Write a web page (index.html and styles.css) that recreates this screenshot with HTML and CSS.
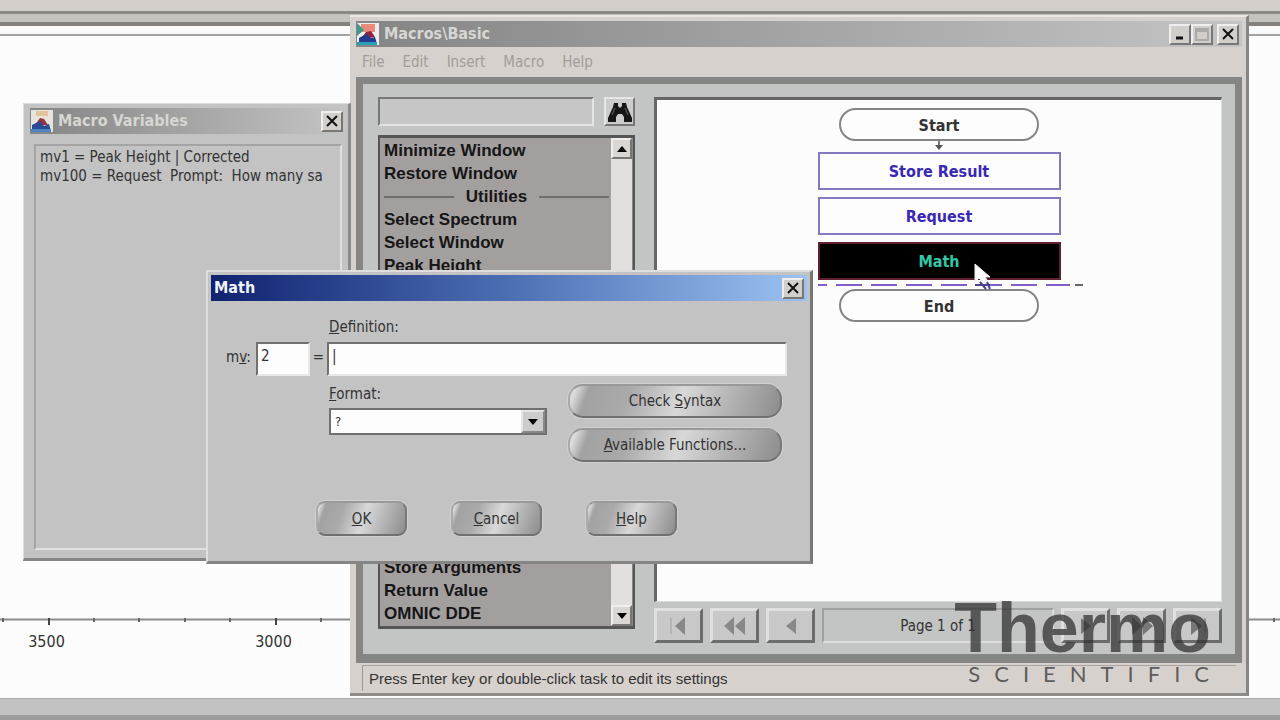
FILE: index.html
```html
<!DOCTYPE html>
<html lang="en">
<head>
<meta charset="utf-8">
<title>Macros\Basic</title>
<link rel="stylesheet" href="styles.css">
</head>
<body>
<div class="desktop">
  <div class="toolbar-edge"></div>
  <div class="toolbar-gap"></div>
  <main class="plot">
    <div class="axis">
      <svg class="axis-ticks" width="100%" height="8" aria-hidden="true">
        <defs><pattern id="ticks" x="48" width="227" height="8" patternUnits="userSpaceOnUse">
          <path d="M0 1.500H227" stroke="#8c8c8c" stroke-width="2"/>
          <path d="M1 0V7" stroke="#444" stroke-width="2"/>
          <path d="M46 0V4M91 0V4M137 0V4M182 0V4" stroke="#666" stroke-width="2"/>
        </pattern></defs>
        <rect width="100%" height="8" fill="url(#ticks)"/>
      </svg>
      <div class="axis-labels"><span>3500</span><span>3000</span></div>
    </div>
  </main>
  <div class="desktop-foot"></div>

  <section class="window macros">
    <header class="titlebar">
      <svg class="app-icon" viewBox="0 0 22 22" aria-hidden="true"><path fill="#eee" d="M0 0h22v22H0z"/><path fill="#e98a7c" d="M4 1h14v8H4z"/><path fill="#3b9a8c" d="M0 0l7 7-7 6z"/><path fill="#8c2440" d="M4 16l5-7 5-1 4 6z"/><path fill="#243a8c" d="M2 21v-6l7-4 5 4 4-1 2 7z"/><path fill="#2aa0b4" d="M0 19h20v3H0z"/></svg>
      <h1 class="title">Macros\Basic</h1>
      <div class="window-buttons">
        <button class="win-btn" aria-label="Minimize"><svg width="12" height="12" viewBox="0 0 12 12"><path d="M2 10h7" stroke="#111" stroke-width="3"/></svg></button>
        <button class="win-btn" aria-label="Maximize"><svg width="14" height="14" viewBox="0 0 14 14"><path d="M1 2h12v11H1z M1 4h12" fill="none" stroke="#aaa" stroke-width="2"/></svg></button>
        <button class="win-btn last" aria-label="Close"><svg width="12" height="12" viewBox="0 0 12 12"><path d="M1 1l10 10M11 1L1 11" stroke="#111" stroke-width="2"/></svg></button>
      </div>
    </header>
    <nav class="menubar">
      <button>File</button><button>Edit</button><button>Insert</button><button>Macro</button><button>Help</button>
    </nav>
    <div class="workspace">
      <div class="tasks">
        <div class="search">
          <input class="search-box" aria-label="Find task">
          <button class="find" aria-label="Find"><svg width="26" height="24" viewBox="0 0 26 24"><path fill="#161616" d="M7 3h4v3l2 2 2-2V3h4l1 4 5 11v4h-8v-5l-2-3h-4l-2 3v5H1v-4L6 7z"/><path d="M8 8L5 15M18 8l3 7" stroke="#666" stroke-width="1"/></svg></button>
        </div>
        <div class="task-list">
          <div class="task-items">
            <ul>
              <li>Minimize Window</li>
              <li>Restore Window</li>
              <li class="group">Utilities</li>
              <li>Select Spectrum</li>
              <li>Select Window</li>
              <li>Peak Height</li>
            </ul>
            <ul>
              <li>Store Arguments</li>
              <li>Return Value</li>
              <li>OMNIC DDE</li>
            </ul>
          </div>
          <div class="scrollbar">
            <button aria-label="Scroll up"><svg width="10" height="6" viewBox="0 0 10 6"><path d="M5 0l5 6H0z"/></svg></button>
            <span class="thumb"></span>
            <button aria-label="Scroll down"><svg width="10" height="6" viewBox="0 0 10 6"><path d="M0 0h10L5 6z"/></svg></button>
          </div>
        </div>
      </div>
      <div class="flow">
        <div class="canvas">
          <div class="chart">
            <div class="node terminal">Start</div>
            <svg class="arrow" width="10" height="11" viewBox="0 0 10 11"><path d="M5 0v5" stroke="#777" stroke-width="2"/><path d="M1 4h8L5 9z" fill="#555"/></svg>
            <div class="node task">Store Result</div>
            <div class="node task">Request</div>
            <div class="node task selected">Math</div>
            <svg class="insert-line" width="270" height="6" viewBox="0 0 270 6"><path d="M0 3h252" stroke="#8060c8" stroke-width="2" stroke-dasharray="26 9" stroke-dashoffset="17"/><path d="M257 3h8" stroke="#666" stroke-width="2"/></svg>
            <div class="node terminal">End</div>
            <svg class="cursor" width="26" height="32" viewBox="0 0 26 32"><path d="M3 23h15M8 20l6 7M15 20l3 7" stroke="#47428a" stroke-width="2"/><path d="M3 2v18l4-4 4 4 4-2-2-3h5z" fill="#fff" stroke="#eee" stroke-width="1"/></svg>
          </div>
        </div>
        <div class="pager">
          <button aria-label="First page"><svg width="22" height="18" viewBox="0 0 22 18"><path d="M3 1v16" stroke="#b4b4b4" stroke-width="2"/><path d="M17 0v18L7 9z" fill="#888"/></svg></button>
          <button aria-label="Fast back"><svg width="22" height="18" viewBox="0 0 22 18"><path d="M10 0v18L0 9zM21 0v18L11 9z" fill="#888"/></svg></button>
          <button aria-label="Previous page"><svg width="22" height="18" viewBox="0 0 22 18"><path d="M16 1v16L6 9z" fill="#888"/></svg></button>
          <output class="page-number">Page 1 of 1</output>
          <button aria-label="Next page"><svg width="22" height="18" viewBox="0 0 22 18"><path d="M6 1v16l10-8z" fill="#777"/></svg></button>
          <button aria-label="Fast forward"><svg width="22" height="18" viewBox="0 0 22 18"><path d="M1 0v18l10-9zM12 0v18l10-9z" fill="#777"/></svg></button>
          <button aria-label="Last page"><svg width="22" height="18" viewBox="0 0 22 18"><path d="M4 0v18l11-9z" fill="#777"/><path d="M18 1v16" stroke="#999" stroke-width="2"/></svg></button>
        </div>
      </div>
    </div>
    <footer class="status">Press Enter key or double-click task to edit its settings</footer>
  </section>

  <section class="window variables">
    <header class="titlebar">
      <svg class="app-icon" viewBox="0 0 22 22" aria-hidden="true"><path fill="#e6e4dc" d="M0 0h22v22H0z"/><path fill="#e2c3a0" d="M5 1h12v5H5z"/><path fill="#98303e" d="M4 15l5-7 4 1 4 6z"/><path fill="#2b4a94" d="M1 21v-6l8-4 4 5 5-2 2 7z"/><path fill="#4c84c4" d="M0 19h20v3H0z"/></svg>
      <h2 class="title">Macro Variables</h2>
      <button class="win-btn" aria-label="Close"><svg width="12" height="12" viewBox="0 0 12 12"><path d="M1 1l10 10M11 1L1 11" stroke="#111" stroke-width="2"/></svg></button>
    </header>
    <div class="variable-list">
      <div>mv1 = Peak Height | Corrected</div>
      <div>mv100 = Request&nbsp; Prompt:&nbsp; How many sa</div>
    </div>
  </section>

  <form class="window dialog">
    <header class="titlebar active">
      <h2 class="title">Math</h2>
      <button type="button" class="win-btn" aria-label="Close"><svg width="12" height="12" viewBox="0 0 12 12"><path d="M1 1l10 10M11 1L1 11" stroke="#111" stroke-width="2"/></svg></button>
    </header>
    <div class="fields">
      <label class="def-label" for="definition"><u>D</u>efinition:</label>
      <label class="mv-label" for="mv">m<u>v</u>:</label>
      <input class="field" id="mv" value="2">
      <span class="equals">=</span>
      <input class="field definition" id="definition" value="|">
      <div class="format">
        <label for="format"><u>F</u>ormat:</label>
        <div class="combo">
          <select id="format"><option>?</option></select>
          <span class="combo-arrow"><svg width="10" height="6" viewBox="0 0 10 6"><path d="M0 0h10L5 6z"/></svg></span>
        </div>
      </div>
      <div class="helpers">
        <button type="button" class="metal wide"><span>Check <u>S</u>yntax</span></button>
        <button type="button" class="metal wide"><span><u>A</u>vailable Functions...</span></button>
      </div>
    </div>
    <div class="actions">
      <button type="button" class="metal"><span><u>O</u>K</span></button>
      <button type="button" class="metal"><span><u>C</u>ancel</span></button>
      <button type="button" class="metal"><span><u>H</u>elp</span></button>
    </div>
  </form>

  <div class="brand">
    <div class="brand-name">Thermo</div>
    <div class="brand-sub">SCIENTIFIC</div>
  </div>
</div>
</body>
</html>
```
FILE: styles.css
```css
* { box-sizing: border-box; }
body { margin: 0; font-family: "DejaVu Sans Condensed", "DejaVu Sans", sans-serif; font-size: 15px; color: #333; }
h1, h2, ul { margin: 0; padding: 0; }
button, input, select { font: inherit; color: inherit; margin: 0; padding: 0; border-radius: 0; outline: none; }
svg { display: block; flex: none; }

.desktop { position: relative; display: flex; flex-direction: column; height: 100vh; min-height: 640px; overflow: hidden; background: #fcfcfc; }
.toolbar-edge { height: 14px; background: #d4cfca; border-bottom: 3px solid #8c8885; }
.toolbar-gap { height: 22px; background: linear-gradient(#c6c2be 8px, #85817e 8px 12px, #fafafa 12px 20px, #a2a2a2 20px); }
.plot { flex: 1; display: flex; flex-direction: column; justify-content: flex-end; }
.axis { height: 80px; }
.axis-labels { display: flex; margin-left: -67px; padding-top: 6px; font-size: 16px; line-height: 20px; }
.axis-labels span { width: 227px; text-align: center; flex: none; }
.desktop-foot { height: 22px; background: #c2c2c2; border-bottom: 5px solid #9c9c9c; border-top: 1px solid #aaa; }

.window { position: absolute; display: flex; flex-direction: column; background: #c3c3c3; }
.titlebar { display: flex; align-items: center; height: 26px; flex: none; padding-right: 3px; background: linear-gradient(90deg, #858585, #c4c4c4); }
.title { flex: 1; font-size: 16px; font-weight: bold; line-height: 24px; color: #d6d6d2; }
.app-icon { width: 22px; height: 22px; margin: 0 5px 0 1px; }
.window-buttons { display: flex; }
.win-btn { width: 22px; height: 21px; display: flex; align-items: center; justify-content: center; flex: none; background: #d2cfcb; border: 2px solid; border-color: #f0eeec #777 #777 #f0eeec; }
.win-btn.last { margin-left: 4px; }

.macros { left: 350px; right: 31px; top: 15px; bottom: 24px; padding: 5px 4px 2px 6px; background: #d6d1cc; border-top: 2px solid #eae6e2; border-right: 3px solid #858585; border-bottom: 3px solid #8f8b88; }
.macros > .titlebar { margin-top: -1px; }
.menubar { display: flex; align-items: center; gap: 18px; height: 30px; padding-left: 6px; flex: none; }
.menubar button { border: 0; background: none; color: #a39c98; }
.workspace { flex: 1; min-height: 0; display: flex; gap: 19px; padding: 13px 13px 11px 15px; background: #c3c5c4; border: 7px solid #858583; border-bottom-width: 9px; }
.tasks { display: flex; flex-direction: column; gap: 9px; width: 257px; padding-bottom: 14px; flex: none; }
.search { display: flex; justify-content: space-between; flex: none; }
.search-box { width: 216px; height: 29px; background: #c6c6c6; border: 2px solid; border-color: #777 #e4e4e4 #e4e4e4 #777; }
.find { width: 31px; height: 29px; display: flex; align-items: center; justify-content: center; background: #ccc; border: 2px solid; border-color: #e6e6e6 #777 #777 #e6e6e6; }
.task-list { flex: 1; min-height: 0; display: flex; background: #a39f9f; border: 3px solid #555; border-left-width: 2px; border-right-width: 2px; }
.task-items { flex: 1; display: flex; flex-direction: column; justify-content: space-between; padding: 1px 2px 1px 4px; font-family: "Liberation Sans", Arial, sans-serif; font-size: 17px; font-weight: bold; line-height: 23px; color: #161616; }
.task-items ul { list-style: none; }
.group { display: flex; align-items: center; gap: 12px; }
.group::before, .group::after { content: ""; flex: 1; height: 2px; background: #716d6d; }
.scrollbar { width: 22px; display: flex; flex-direction: column; background: #e2dfdf; border-right: 1px solid #888; }
.scrollbar button { height: 21px; display: flex; align-items: center; justify-content: center; background: #dad6d4; border: 2px solid; border-color: #f0eeec #777 #777 #f0eeec; }
.thumb { flex: 1; }

.flow { flex: 1; min-width: 0; display: flex; flex-direction: column; gap: 6px; }
.canvas { flex: 1; min-height: 0; padding-top: 8px; background: #fcfcfc; border: 3px solid #666; border-right: 1px solid #ddd; border-bottom: 1px solid #ddd; }
.chart { position: relative; width: 243px; margin: 0 auto; display: flex; flex-direction: column; align-items: center; font-size: 16px; font-weight: bold; color: #333; }
.node { display: flex; align-items: center; justify-content: center; background: #fdfdfd; border: 2px solid #858585; }
.terminal { width: 200px; height: 33px; border-radius: 17px; padding-top: 2px; }
.task { width: 243px; height: 38px; margin-bottom: 7px; border-color: #8478c0; color: #3a28b4; }
.selected { background: #000; border-color: #602030; color: #30c8a8; margin-bottom: 2px; }
.insert-line { align-self: flex-start; margin-bottom: 1px; }
.cursor { position: absolute; left: 154px; top: 154px; }
.pager { display: flex; gap: 7px; height: 35px; flex: none; }
.pager button { width: 49px; flex: none; display: flex; align-items: center; justify-content: center; background: #c8c8c8; border: 3px solid; border-color: #e0e0e0 #6c6c6c #6c6c6c #e0e0e0; }
.page-number { flex: 1; display: flex; align-items: center; justify-content: center; border: 2px solid; border-color: #a0a0a0 #dcdcdc #dcdcdc #a0a0a0; }
.status { flex: none; height: 26px; margin: 2px 6px 0; padding-left: 6px; font-family: "Liberation Sans", Arial, sans-serif; font-size: 15px; line-height: 25px; border-left: 1px solid #999; border-top: 1px solid #a8a4a0; }

.variables { left: 23px; top: 103px; width: 328px; height: 458px; padding: 4px 2px 8px 6px; border: 1px solid #ddd; border-right: 3px solid #8a8a8a; border-bottom: 3px solid #858585; }
.variable-list { flex: 1; margin: 10px 4px 0; padding: 2px 0 0 4px; line-height: 19px; white-space: nowrap; overflow: hidden; border: 2px solid; border-color: #a4a4a4 #e0e0e0 #e0e0e0 #a4a4a4; }

.dialog { left: 206px; top: 270px; width: 607px; height: 294px; padding: 3px 3px 0; border: 2px solid #dedede; border-right: 3px solid #777; border-bottom: 3px solid #858585; }
.titlebar.active { background: linear-gradient(90deg, #102270, #4c6fb4 50%, #9cc2f2); }
.active .title { padding-left: 3px; color: #f0f2fa; }
.fields { display: grid; grid-template-columns: 30px 54px 17px 220px 1fr; margin: 16px 20px 0 15px; align-items: center; }
.fields label { line-height: 20px; }
.def-label { grid-column: 4 / 6; padding-left: 2px; }
.mv-label { grid-column: 1; }
.equals { text-align: center; }
.field { width: 100%; height: 34px; margin-top: 5px; padding: 0 3px 6px; background: #fdfdfd; border: 2px solid; border-color: #707070 #e8e8e8 #e8e8e8 #707070; }
.definition { grid-column: 4 / 6; }
.format { grid-column: 4; align-self: start; padding: 8px 0 0 2px; }
.combo { position: relative; margin-top: 4px; }
.combo select { width: 100%; height: 27px; padding-left: 4px; appearance: none; background: #fdfdfd; border: 2px solid #707070; font-size: 13px; }
.combo-arrow { position: absolute; right: 2px; top: 2px; width: 24px; height: 23px; display: flex; align-items: center; justify-content: center; pointer-events: none; background: #ccc; border: 2px solid; border-color: #e6e6e6 #888 #888 #e6e6e6; }
.helpers { grid-column: 5; justify-self: end; display: flex; flex-direction: column; gap: 10px; padding: 8px 5px 0 0; }
.metal { width: 91px; height: 35px; border: 2px solid; border-color: #999 #777 #707070 #aaa; border-radius: 9px; background: linear-gradient(110deg, #dcdcdc 3%, #a2a2a2 9%, #aaa 28%, #d8d8d8 52%, #b8b8b8 72%, #8c8c8c); box-shadow: 0 0 0 1px #d0d0d0; }
.metal.wide { width: 214px; height: 34px; border-radius: 15px; }
.actions { display: flex; gap: 44px; margin: 39px 0 0 105px; }

.brand { position: absolute; right: 69px; bottom: 34px; color: rgba(48, 48, 48, 0.74); text-align: right; pointer-events: none; }
.brand-name { font-family: "Liberation Sans", Arial, sans-serif; font-size: 70px; font-weight: bold; line-height: 68px; }
.brand-sub { font-family: Lato, sans-serif; font-size: 22px; line-height: 24px; letter-spacing: 14px; margin-right: -12px; }
```
